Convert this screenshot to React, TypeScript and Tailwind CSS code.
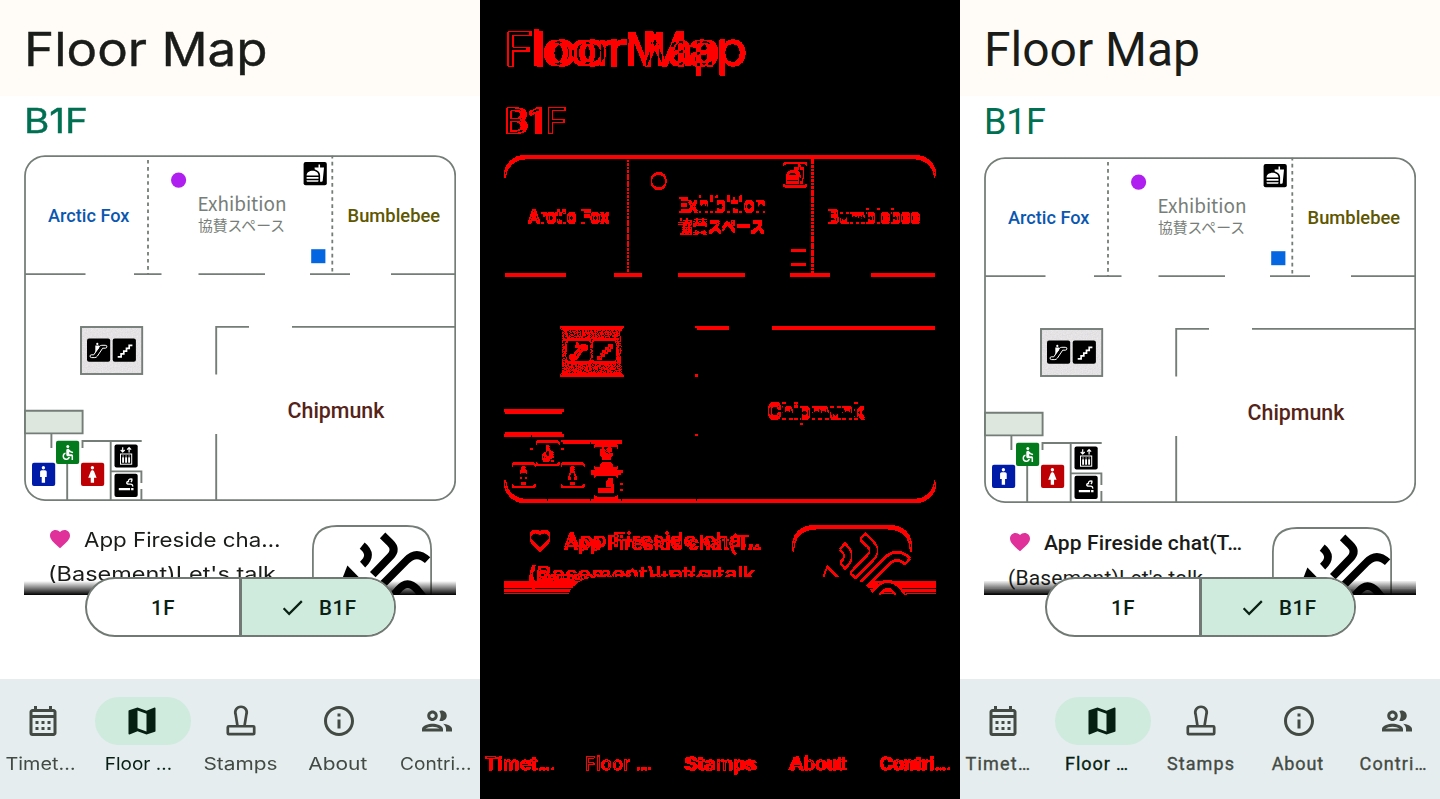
import { useLayoutEffect, useRef, type ReactNode } from "react";
import {
  MdAccessible,
  MdFastfood,
  MdFavorite,
  MdCheck,
  MdInfoOutline,
  MdMan,
  MdMap,
  MdOutlineCalendarMonth,
  MdOutlineGroup,
  MdWoman,
} from "react-icons/md";

type Variant = "wide" | "compact";

const WALL = "#747d77";

/** One line of text spread to a given width, by tracking or by stretching the glyphs. */
function Fit({ text, width, stretch = false, className = "" }: { text: string; width: number; stretch?: boolean; className?: string }) {
  const ref = useRef<HTMLSpanElement>(null);
  useLayoutEffect(() => {
    const el = ref.current;
    if (!el) return;
    el.style.transform = "";
    el.style.letterSpacing = "";
    const natural = el.getBoundingClientRect().width;
    if (stretch) {
      el.style.transform = `scaleX(${width / natural})`;
    } else {
      el.style.letterSpacing = `${(width - natural) / (text.length - 1)}px`;
    }
  }, [text, width, stretch]);
  return (
    <span ref={ref} className={`inline-block origin-left whitespace-pre ${className}`}>
      {text}
    </span>
  );
}

function Tile({ x, y, fill = "#000", children }: { x: number; y: number; fill?: string; children: ReactNode }) {
  return (
    <g transform={`translate(${x} ${y})`}>
      <rect width="23.2" height="23.2" rx="2" fill={fill} />
      {children}
    </g>
  );
}

function FloorPlan({ id }: { id: string }) {
  return (
    <svg className="block h-[347px] w-[432px] shrink-0" viewBox="24 155 432 347" fill="none">
      <defs>
        <filter id={id} x="0" y="0" width="1" height="1" colorInterpolationFilters="sRGB">
          <feTurbulence type="fractalNoise" baseFrequency="0.8" numOctaves="2" seed="4" />
          <feColorMatrix values="0.1 0 0 0 0.845  0.1 0 0 0 0.837  0.1 0 0 0 0.843  0 0 0 0 1" />
        </filter>
      </defs>
      <rect x="80.8" y="327" width="61.4" height="47" fill="#e2e0e2" filter={`url(#${id})`} />
      <g stroke={WALL} strokeWidth="1.9">
        <rect x="25" y="156" width="430.2" height="344.1" rx="20" strokeWidth="1.75" />
        <path d="M25 274.1H85.5M134 274.1H161.5M198.5 274.1H265M310 274.1H350M391 274.1H455" />
        <path d="M148 160V274" strokeDasharray="3.6 3.47" strokeWidth="1.8" />
        <path d="M332.3 155.8V274" strokeDasharray="3.6 3.47" strokeDashoffset="1" strokeWidth="1.8" />
        <rect x="81" y="327" width="61.2" height="47" />
        <path d="M216.2 374.5V326.9H249M292 326.9H455M216.2 434V500" />
        <path d="M25 410.8H82.6V433.4H25Z" fill="#dde7de" />
        <path d="M51.4 433V448M67.2 463V500M82.5 448V441H141.7M110.7 441V500M110.7 471.4H141.4V483M141.4 489V500" />
      </g>

      <circle cx="178.6" cy="180.1" r="7.6" fill="#af20f0" />
      <rect x="311.2" y="249.2" width="14.2" height="14" fill="#0466e0" />

      <Tile x={303.6} y={162}>
        <MdFastfood x="2.2" y="1.6" size={19} color="#fff" />
      </Tile>
      <Tile x={87} y={338.6}>
        <path
          d="M4.2 16.2h2.6l5.4-8.1q1-1.4 2.6-1.4h3.4q2 0 1.7 1.6q-.2 1.2-1.6 1.3h-2.6l-5.3 7.9q-1 1.5-2.6 1.5H4.6q-1.7-.1-1.6-1.5q.1-1.2 1.2-1.3Z"
          stroke="#fff"
          strokeWidth="1"
        />
        <circle cx="10.3" cy="5.3" r="1.1" fill="#fff" />
        <path d="M8.3 7h4l-.2 2.4-3.8 4.8Z" fill="#fff" />
      </Tile>
      <Tile x={112.7} y={338.6}>
        <path d="M5 18.3h3.4v-3h2.7v-2.8h2.7V9.7h2.7V6.8h3.2" stroke="#fff" strokeWidth="1.7" />
      </Tile>
      <Tile x={56} y={440.8} fill="#037a1c">
        <MdAccessible x="2.8" y="2.6" size={18} color="#fff" />
      </Tile>
      <Tile x={32} y={462.8} fill="#001ba8">
        <MdMan x="1.4" y="1.6" size={20} color="#fff" />
      </Tile>
      <Tile x={81} y={462.8} fill="#bd0003">
        <MdWoman x="1.4" y="1.6" size={20} color="#fff" />
      </Tile>
      <Tile x={114.5} y={444.4}>
        <path d="M8.2 2.8V7.4M6.2 5.6L8.2 7.6L10.2 5.6M14.6 8V3.4M12.6 5.2L14.6 3.2L16.6 5.2" stroke="#fff" strokeWidth="1.2" />
        <rect x="6" y="9.6" width="11.2" height="10.2" stroke="#fff" strokeWidth="1" />
        <path d="M8.6 12.8v5.6M11.6 12.8v5.6M14.6 12.8v5.6" stroke="#fff" strokeWidth="1.9" />
        <path d="M8.6 11v1.1M11.6 11v1.1M14.6 11v1.1" stroke="#fff" strokeWidth="1.2" />
      </Tile>
      <Tile x={114.5} y={473.8}>
        <path d="M4.3 15.4H15.6M16.6 15.4H19" stroke="#fff" strokeWidth="2.2" />
        <path d="M18.2 12.8q.2-2.4-2.2-2.4h-1.6q-2.2 0-2.2-1.4q0-1.3 1.8-1.3q-.4-2.4 2.6-2.6M17 4.6q1.2 2-.6 3.6" stroke="#fff" strokeWidth="1.3" />
      </Tile>

      <g className="font-['Roboto',sans-serif] font-medium">
        <text x="48" y="221.8" fontSize="18.2" fill="#0b57b0" textLength="81.5" lengthAdjust="spacingAndGlyphs">Arctic Fox</text>
        <text x="347.6" y="221.8" fontSize="18.2" fill="#5e5600" textLength="92.5" lengthAdjust="spacingAndGlyphs">Bumblebee</text>
        <text x="287.6" y="418" fontSize="21.8" fill="#552318" textLength="96.8" lengthAdjust="spacingAndGlyphs">Chipmunk</text>
      </g>
      <g className="font-['Noto_Sans_CJK_JP',sans-serif]" fill="#777e79">
        <text x="197.5" y="210.6" fontSize="18.8" textLength="89" lengthAdjust="spacingAndGlyphs">Exhibition</text>
        <text x="198" y="231" fontSize="14.6" textLength="87" lengthAdjust="spacingAndGlyphs">協賛スペース</text>
      </g>
    </svg>
  );
}

function Artwork() {
  return (
    <svg className="block h-[78px] w-[122px]" viewBox="311 524 122 78" fill="none">
      <path d="M312.9 604V550Q312.9 526 337 526H407Q431.1 526 431.1 550V604" stroke={WALL} strokeWidth="1.8" />
      <g stroke="#000" strokeWidth="7.8">
        <path d="M362.2 545.6Q373.6 554.8 362.6 564.6" />
        <path d="M382.6 535.4L390 542.6Q397 549.4 390.4 556.4L372.8 574.6" />
        <path d="M382 585L406.5 560.4Q416.5 549.8 427.6 560.2" />
        <path d="M391 598L398 590Q407.5 578.4 417 589.4L424 598" />
      </g>
      <path d="M347.4 565.6L364 582.5L341 582Z" fill="#000" />
    </svg>
  );
}

function StampIcon({ className }: { className?: string }) {
  return (
    <svg className={className} width="36" height="36" viewBox="0 0 24 24" fill="none" stroke="currentColor" strokeWidth="1.8">
      <path d="M9.7 15.5L8.5 8C7.4 5 9.2 2.5 12 2.5S16.6 5 15.5 8L14.3 15.5" />
      <rect x="3.2" y="15.5" width="17.6" height="5.3" rx=".7" />
    </svg>
  );
}

const copy = {
  wide: {
    font: "font-['Inter',sans-serif]",
    title: { size: "text-[46.6px] leading-[98px] pl-[24px] [-webkit-text-stroke:0.4px]", width: 243.5 },
    floor: { size: "h-[59px] text-[34.6px] leading-[49px] pl-[24px] [-webkit-text-stroke:0.4px]", width: 64 },
    row: "leading-[34px]",
    top: "pt-[21px]",
    artTop: "mt-[1px]",
    talk: { text: "App Fireside cha…", size: "text-[20.2px]", width: 196.5 },
    room: { size: "text-[19.8px]", width: 228 },
    label: "text-[17.4px]",
    labels: [70, 67.5, 74, 59, 71.5],
    fade: "bg-[linear-gradient(to_bottom,transparent,#000)]",
  },
  compact: {
    font: "font-['Roboto',sans-serif]",
    title: { size: "text-[48px] leading-[99px] pl-[24px]", width: 216 },
    floor: { size: "h-[61px] text-[36px] leading-[53px] pl-[24px]", width: 62 },
    row: "leading-[35px]",
    top: "pt-[21.5px]",
    artTop: "mt-[0.5px]",
    talk: { text: "App Fireside chat(T…", size: "text-[21px] font-medium", width: 198 },
    room: { size: "text-[21px]", width: 195 },
    label: "text-[18px] [-webkit-text-stroke:0.35px]",
    labels: [64.5, 63, 67, 51.5, 67],
    fade: "bg-[linear-gradient(to_bottom,#0000000d_7px,transparent_7px_8px,#00000018_8px_11px,transparent_11px_12px,#00000050_12px_13px,transparent_13px),linear-gradient(to_bottom,transparent,#000)]",
  },
};

const tabs = [
  { label: "Timet…", clipped: true, shift: "-translate-x-px", textShift: "-translate-x-[0.5px]" },
  { label: "Floor …", clipped: true, active: true, shift: "", textShift: "translate-x-[0.7px]" },
  { label: "Stamps", shift: "translate-x-px", textShift: "translate-x-[0.5px]" },
  { label: "About", shift: "", textShift: "-translate-x-[0.7px]" },
  { label: "Contri…", clipped: true, shift: "", textShift: "" },
];

function TabIcon({ index }: { index: number }) {
  switch (index) {
    case 0:
      return <MdOutlineCalendarMonth size={36} />;
    case 1:
      return <MdMap size={36} className="-translate-x-px" />;
    case 2:
      return <StampIcon />;
    case 3:
      return <MdInfoOutline size={36} />;
    default:
      return <MdOutlineGroup size={36} />;
  }
}

function Phone({ variant, id }: { variant: Variant; id: string }) {
  const c = copy[variant];
  const stretch = variant === "wide";
  return (
    <div className={`relative flex h-[799px] w-[480px] flex-col overflow-hidden bg-white text-[#1a1c19] ${c.font}`}>
      <header className={`h-24 shrink-0 bg-[#fffcf7] ${c.title.size}`}>
        <Fit text="Floor Map" width={c.title.width} stretch={stretch} />
      </header>

      <main className="relative flex h-[499px] shrink-0 flex-col overflow-hidden">
        <h2 className={`shrink-0 text-[#007052] ${c.floor.size}`}>
          <Fit text="B1F" width={c.floor.width} stretch={stretch} />
        </h2>
        <div className="pl-6">
          <FloorPlan id={id} />
        </div>
        <div className={`flex pl-12 ${c.top} ${c.row}`}>
          <div className="w-[263px] shrink-0">
            <div className="flex items-center">
              <MdFavorite size={24} className="mr-3 mb-[2px] shrink-0 text-[#e0319b]" />
              <Fit text={c.talk.text} width={c.talk.width} stretch={stretch} className={c.talk.size} />
            </div>
            <div className="whitespace-nowrap">
              <Fit text="(Basement)Let's talk" width={c.room.width} stretch={stretch} className={c.room.size} />
            </div>
          </div>
          <div className={c.artTop}>
            <Artwork />
          </div>
        </div>
        <div className={`absolute right-6 bottom-0 left-6 h-[14px] ${c.fade}`} />
      </main>

      <div className="absolute top-[577px] left-[85px] flex h-[60px] w-[311px] overflow-hidden rounded-full border-2 border-[#707973] bg-white font-['Roboto',sans-serif] text-[20.5px] font-medium text-[#0a2116]">
        <div className="flex w-[152px] items-center justify-center">
          <Fit text="1F" width={23.5} className="mt-[3px]" />
        </div>
        <div className="flex flex-1 items-center border-l-[3px] border-[#707973] bg-[#cfebdd] pl-[37px]">
          <MdCheck size={27} />
          <Fit text="B1F" width={37} className="mt-[3px] ml-[13px]" />
        </div>
      </div>

      <nav className="mt-auto grid h-[120px] grid-cols-5 gap-3 bg-[#e5edee] text-[#434a43]">
        {tabs.map((tab, i) => (
          <div key={tab.label} className={`flex flex-col pt-[18px] ${tab.active ? "text-[#051f12]" : ""}`}>
            <div
              className={`flex h-12 w-24 shrink-0 items-center justify-center rounded-full ${tab.shift} ${
                tab.active ? "-ml-[3.4px] bg-[#cfebdd]" : "-ml-[4.4px]"
              }`}
            >
              <TabIcon index={i} />
            </div>
            <div className={`mt-[7px] flex h-6 leading-6 ${c.label} ${tab.textShift}`}>
              {tab.clipped ? (
                <Fit text={tab.label} width={c.labels[i]} stretch={stretch} className="ml-[6px]" />
              ) : (
                <div className="flex w-full justify-center">
                  <div className={stretch ? (i === 2 ? "w-[74px]" : "w-[59px]") : i === 2 ? "w-[67px]" : "w-[52px]"}>
                    <Fit text={tab.label} width={c.labels[i]} stretch={stretch} />
                  </div>
                </div>
              )}
            </div>
          </div>
        ))}
      </nav>
    </div>
  );
}

export default function App() {
  return (
    <div className="flex h-[799px] w-[1440px] overflow-hidden bg-black">
      <Phone variant="wide" id="grain-before" />
      <div className="relative h-[799px] w-[480px] overflow-hidden filter-[url(#changed-pixels)]">
        <Phone variant="wide" id="grain-diff-a" />
        <div className="absolute inset-0 mix-blend-difference">
          <Phone variant="compact" id="grain-diff-b" />
        </div>
      </div>
      <Phone variant="compact" id="grain-after" />
      <svg className="absolute size-0">
        <filter id="changed-pixels" x="0" y="0" width="1" height="1" colorInterpolationFilters="sRGB">
          <feColorMatrix values="255 255 255 0 -4.5  0 0 0 0 0  0 0 0 0 0  0 0 0 0 1" />
        </filter>
      </svg>
    </div>
  );
}
